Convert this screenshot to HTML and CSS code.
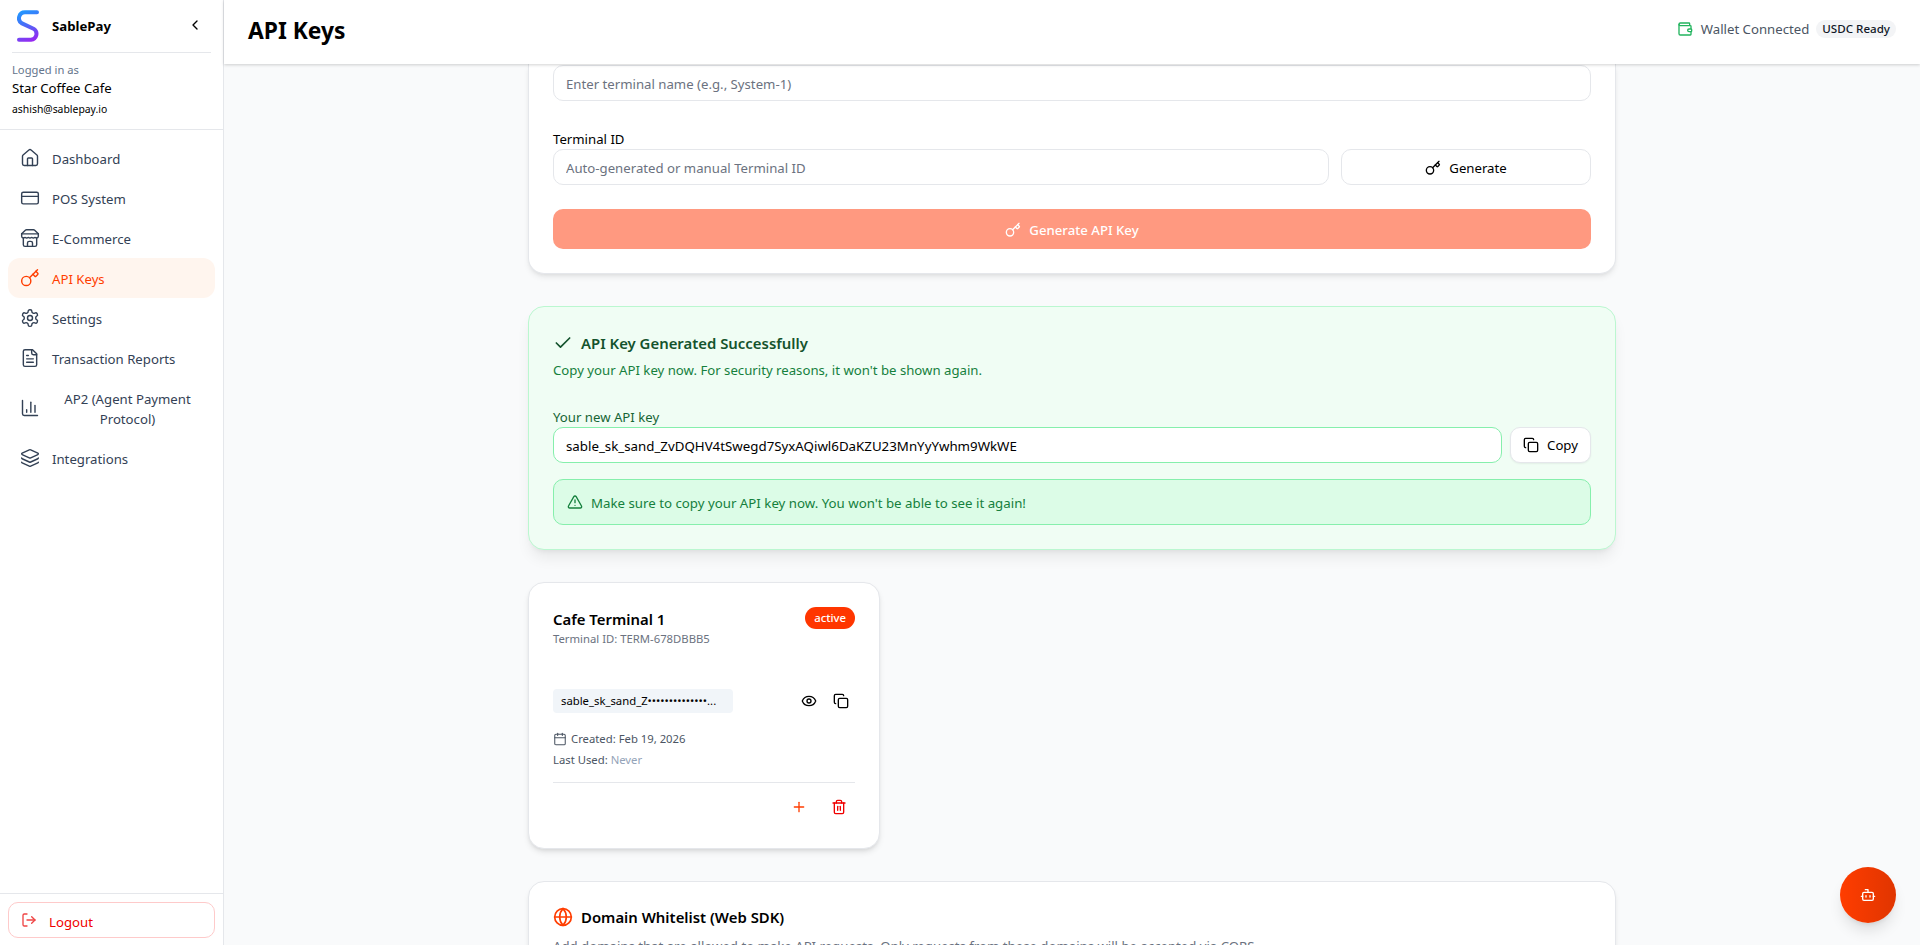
FILE: index.html
```html
<!DOCTYPE html>
<html lang="en">
<head>
<meta charset="utf-8">
<title>API Keys - SablePay</title>
<link rel="stylesheet" href="styles.css">
</head>
<body>
<svg class="defs" width="0" height="0" aria-hidden="true">
  <defs>
    <linearGradient id="logoGrad" gradientUnits="userSpaceOnUse" x1="4" y1="0" x2="18" y2="32">
      <stop offset="0" stop-color="#1e9bff"/>
      <stop offset="0.45" stop-color="#4a6cf7"/>
      <stop offset="1" stop-color="#a020f0"/>
    </linearGradient>
    <symbol id="i-key" viewBox="0 0 24 24"><path d="m15.5 7.5 2.3 2.3a1 1 0 0 0 1.4 0l2.1-2.1a1 1 0 0 0 0-1.4L19 4"/><path d="m21 2-9.6 9.6"/><circle cx="7.5" cy="15.5" r="5.5"/></symbol>
    <symbol id="i-copy" viewBox="0 0 24 24"><rect x="8" y="8" width="14" height="14" rx="2"/><path d="M4 16c-1.1 0-2-.9-2-2V4c0-1.1.9-2 2-2h10c1.1 0 2 .9 2 2"/></symbol>
  </defs>
</svg>
<div class="app">
  <aside class="sidebar">
    <div class="brand-block">
      <div class="brand">
        <svg class="logo" viewBox="0 0 22 32"><path d="M20 2.2H8A6 6 0 0 0 5 13.4l12 5.6A6 6 0 0 1 14 29.8H2"/></svg>
        <span class="brand-name">SablePay</span>
        <svg class="icon-chevron" viewBox="0 0 24 24"><path d="m15 18-6-6 6-6"/></svg>
      </div>
      <div class="account">
        <div class="account-label">Logged in as</div>
        <div class="account-name">Star Coffee Cafe</div>
        <div class="account-email">ashish@sablepay.io</div>
      </div>
    </div>
    <nav class="nav">
      <a class="nav-item"><svg class="icon" viewBox="0 0 24 24"><path d="M15 21v-8a1 1 0 0 0-1-1h-4a1 1 0 0 0-1 1v8"/><path d="M3 10a2 2 0 0 1 .709-1.528l7-5.999a2 2 0 0 1 2.582 0l7 5.999A2 2 0 0 1 21 10v9a2 2 0 0 1-2 2H5a2 2 0 0 1-2-2z"/></svg><span>Dashboard</span></a>
      <a class="nav-item"><svg class="icon" viewBox="0 0 24 24"><rect width="20" height="14" x="2" y="5" rx="2"/><path d="M2 10h20"/></svg><span>POS System</span></a>
      <a class="nav-item"><svg class="icon" viewBox="0 0 24 24"><path d="m2 7 4.41-4.41A2 2 0 0 1 7.83 2h8.34a2 2 0 0 1 1.42.59L22 7"/><path d="M4 12v8a2 2 0 0 0 2 2h12a2 2 0 0 0 2-2v-8"/><path d="M15 22v-4a2 2 0 0 0-2-2h-2a2 2 0 0 0-2 2v4"/><path d="M2 7h20"/><path d="M22 7v3a2 2 0 0 1-2 2a2.7 2.7 0 0 1-1.59-.63.7.7 0 0 0-.82 0A2.7 2.7 0 0 1 16 12a2.7 2.7 0 0 1-1.59-.63.7.7 0 0 0-.82 0A2.7 2.7 0 0 1 12 12a2.7 2.7 0 0 1-1.59-.63.7.7 0 0 0-.82 0A2.7 2.7 0 0 1 8 12a2.7 2.7 0 0 1-1.59-.63.7.7 0 0 0-.82 0A2.7 2.7 0 0 1 4 12a2 2 0 0 1-2-2V7"/></svg><span>E-Commerce</span></a>
      <a class="nav-item nav-active"><svg class="icon"><use href="#i-key"/></svg><span>API Keys</span></a>
      <a class="nav-item"><svg class="icon" viewBox="0 0 24 24"><path d="M12.22 2h-.44a2 2 0 0 0-2 2v.18a2 2 0 0 1-1 1.73l-.43.25a2 2 0 0 1-2 0l-.15-.08a2 2 0 0 0-2.73.73l-.22.38a2 2 0 0 0 .73 2.73l.15.1a2 2 0 0 1 1 1.72v.51a2 2 0 0 1-1 1.74l-.15.09a2 2 0 0 0-.73 2.73l.22.38a2 2 0 0 0 2.73.73l.15-.08a2 2 0 0 1 2 0l.43.25a2 2 0 0 1 1 1.73V20a2 2 0 0 0 2 2h.44a2 2 0 0 0 2-2v-.18a2 2 0 0 1 1-1.73l.43-.25a2 2 0 0 1 2 0l.15.08a2 2 0 0 0 2.73-.73l.22-.39a2 2 0 0 0-.73-2.73l-.15-.08a2 2 0 0 1-1-1.74v-.5a2 2 0 0 1 1-1.74l.15-.09a2 2 0 0 0 .73-2.73l-.22-.38a2 2 0 0 0-2.73-.73l-.15.08a2 2 0 0 1-2 0l-.43-.25a2 2 0 0 1-1-1.73V4a2 2 0 0 0-2-2z"/><circle cx="12" cy="12" r="3"/></svg><span>Settings</span></a>
      <a class="nav-item"><svg class="icon" viewBox="0 0 24 24"><path d="M15 2H6a2 2 0 0 0-2 2v16a2 2 0 0 0 2 2h12a2 2 0 0 0 2-2V7Z"/><path d="M14 2v4a2 2 0 0 0 2 2h4"/><path d="M10 9H8"/><path d="M16 13H8"/><path d="M16 17H8"/></svg><span>Transaction Reports</span></a>
      <a class="nav-item nav-tall"><svg class="icon" viewBox="0 0 24 24"><path d="M3 3v16a2 2 0 0 0 2 2h16"/><path d="M18 17V9"/><path d="M13 17V5"/><path d="M8 17v-3"/></svg><span class="nav-wrap">AP2 (Agent Payment Protocol)</span></a>
      <a class="nav-item"><svg class="icon" viewBox="0 0 24 24"><path d="M12.83 2.18a2 2 0 0 0-1.66 0L2.6 6.08a1 1 0 0 0 0 1.83l8.58 3.91a2 2 0 0 0 1.66 0l8.58-3.9a1 1 0 0 0 0-1.83z"/><path d="M2 12a1 1 0 0 0 .58.91l8.6 3.91a2 2 0 0 0 1.65 0l8.58-3.9A1 1 0 0 0 22 12"/><path d="M2 17a1 1 0 0 0 .58.91l8.6 3.91a2 2 0 0 0 1.65 0l8.58-3.9A1 1 0 0 0 22 17"/></svg><span>Integrations</span></a>
    </nav>
    <div class="sidebar-foot">
      <button class="logout"><svg class="icon-logout" viewBox="0 0 24 24"><path d="M9 21H5a2 2 0 0 1-2-2V5a2 2 0 0 1 2-2h4"/><path d="m16 17 5-5-5-5"/><path d="M21 12H9"/></svg><span>Logout</span></button>
    </div>
  </aside>

  <div class="page">
    <header class="topbar">
      <h1 class="page-title">API Keys</h1>
      <div class="status">
        <svg class="icon-wallet" viewBox="0 0 24 24"><path d="M19 7V4a1 1 0 0 0-1-1H5a2 2 0 0 0 0 4h15a1 1 0 0 1 1 1v4h-3a2 2 0 0 0 0 4h3a1 1 0 0 0 1-1v-2a1 1 0 0 0-1-1"/><path d="M3 5v14a2 2 0 0 0 2 2h15a1 1 0 0 0 1-1v-4"/></svg>
        <span class="status-text">Wallet Connected</span>
        <span class="status-badge">USDC Ready</span>
      </div>
    </header>
    <main class="content">
      <section class="card card-form">
        <input class="field" type="text" placeholder="Enter terminal name (e.g., System-1)">
        <label class="field-label">Terminal ID</label>
        <div class="id-row">
          <input class="field" type="text" placeholder="Auto-generated or manual Terminal ID">
          <button class="btn-outline"><svg class="icon-sm"><use href="#i-key"/></svg><span>Generate</span></button>
        </div>
        <button class="btn-primary"><svg class="icon-sm"><use href="#i-key"/></svg><span>Generate API Key</span></button>
      </section>

      <section class="card card-success">
        <div class="success-title"><svg class="icon-check" viewBox="0 0 24 24"><path d="M20 6 9 17l-5-5"/></svg><h2>API Key Generated Successfully</h2></div>
        <p class="success-desc">Copy your API key now. For security reasons, it won't be shown again.</p>
        <label class="success-label">Your new API key</label>
        <div class="key-row">
          <input class="field field-key" type="text" readonly value="sable_sk_sand_ZvDQHV4tSwegd7SyxAQiwl6DaKZU23MnYyYwhm9WkWE">
          <button class="btn-copy"><svg class="icon-sm"><use href="#i-copy"/></svg><span>Copy</span></button>
        </div>
        <div class="warning"><svg class="icon-sm" viewBox="0 0 24 24"><path d="m21.73 18-8-14a2 2 0 0 0-3.48 0l-8 14A2 2 0 0 0 4 21h16a2 2 0 0 0 1.73-3"/><path d="M12 9v4"/><path d="M12 17h.01"/></svg><span class="warning-text">Make sure to copy your API key now. You won't be able to see it again!</span></div>
      </section>

      <div class="terminal-grid">
        <article class="card terminal">
          <div class="terminal-head">
            <div>
              <h3 class="terminal-name">Cafe Terminal 1</h3>
              <div class="terminal-id">Terminal ID: TERM-678DBBB5</div>
            </div>
            <span class="badge-active">active</span>
          </div>
          <div class="terminal-key">
            <code class="key-pill">sable_sk_sand_Z••••••••••••••...</code>
            <svg class="icon-sm icon-eye" viewBox="0 0 24 24"><path d="M2.062 12.348a1 1 0 0 1 0-.696 10.75 10.75 0 0 1 19.876 0 1 1 0 0 1 0 .696 10.75 10.75 0 0 1-19.876 0"/><circle cx="12" cy="12" r="3"/></svg>
            <svg class="icon-sm"><use href="#i-copy"/></svg>
          </div>
          <div class="meta-created"><svg class="icon-cal" viewBox="0 0 24 24"><path d="M8 2v4"/><path d="M16 2v4"/><rect width="18" height="18" x="3" y="4" rx="2"/><path d="M3 10h18"/></svg><span>Created: Feb 19, 2026</span></div>
          <div class="meta-used">Last Used: <span class="meta-never">Never</span></div>
          <div class="terminal-actions">
            <svg class="icon-sm icon-plus" viewBox="0 0 24 24"><path d="M5 12h14"/><path d="M12 5v14"/></svg>
            <svg class="icon-sm icon-trash" viewBox="0 0 24 24"><path d="M3 6h18"/><path d="M19 6v14c0 1-1 2-2 2H7c-1 0-2-1-2-2V6"/><path d="M8 6V4c0-1 1-2 2-2h4c1 0 2 1 2 2v2"/><path d="M10 11v6"/><path d="M14 11v6"/></svg>
          </div>
        </article>
      </div>

      <section class="card card-domain">
        <div class="domain-title"><svg class="icon-globe" viewBox="0 0 24 24"><circle cx="12" cy="12" r="10"/><path d="M12 2a14.5 14.5 0 0 0 0 20 14.5 14.5 0 0 0 0-20"/><path d="M2 12h20"/></svg><h2>Domain Whitelist (Web SDK)</h2></div>
        <p class="domain-desc">Add domains that are allowed to make API requests. Only requests from these domains will be accepted via CORS.</p>
      </section>
    </main>
  </div>
</div>
<button class="fab" aria-label="Assistant"><svg class="icon-sm" viewBox="0 0 24 24"><path d="M12 8V4H8"/><rect width="16" height="12" x="4" y="8" rx="2"/><path d="M2 14h2"/><path d="M20 14h2"/><path d="M15 13v2"/><path d="M9 13v2"/></svg></button>
</body>
</html>
```
FILE: styles.css
```css
* { box-sizing: border-box; }
html, body { margin: 0; height: 100%; overflow: hidden; }
body { font-family: "Noto Sans", "Open Sans", sans-serif; font-size: 13.2px; line-height: 20px; background: #f9fafb; color: #000; }
svg { fill: none; stroke: currentColor; stroke-width: 2; stroke-linecap: round; stroke-linejoin: round; flex: none; }
h1, h2, h3, p { margin: 0; }
.defs { position: absolute; }
button, input { font: inherit; }

.app { display: flex; height: 945px; }

.sidebar { width: 224px; flex: none; display: flex; flex-direction: column; background: #fff; border-right: 1px solid #e5e7eb; }
.brand-block { padding: 0 12px; height: 130px; border-bottom: 1px solid #e5e7eb; margin: 0; }
.brand { display: flex; align-items: center; height: 53px; padding: 0 0 1px 5px; border-bottom: 1px solid #e5e7eb; }
.logo { width: 22px; height: 32px; stroke: url(#logoGrad); stroke-width: 4; }
.brand-name { font-size: 13.2px; font-weight: 700; margin-left: 13px; flex: 1; }
.icon-chevron { width: 16px; height: 16px; margin-right: 8px; margin-top: -2px; }
.account { padding-top: 7px; }
.account-label { font-size: 11.2px; line-height: 20px; color: #64748b; }
.account-name { font-size: 13.2px; line-height: 20px; margin-top: -2px; }
.account-email { font-size: 10.4px; line-height: 16px; margin-top: 3px; }

.nav { flex: 1; padding: 8px 0 0; }
.nav-item { display: flex; align-items: center; gap: 12px; height: 40px; margin: 0 8px; padding: 0 12px; border-radius: 12px; color: #334155; font-size: 13.2px; }
.nav-item span { padding-top: 1px; }
.nav-tall { height: 60px; }
.nav-wrap { flex: 1; text-align: center; }
.nav-active { background: #fff5ee; color: #ff3d00; }
.icon { width: 20px; height: 20px; stroke-width: 1.7; }

.sidebar-foot { border-top: 1px solid #e5e7eb; padding: 8px 8px 7px; }
.logout { display: flex; align-items: center; width: 100%; height: 36px; padding: 0 12px; gap: 12px; background: #fff; border: 1px solid #fecaca; border-radius: 10px; color: #f00000; font-size: 13.2px; }
.logout span { padding-top: 3px; }
.icon-logout { width: 16px; height: 16px; color: #ef4444; }

.page { flex: 1; min-width: 0; display: flex; flex-direction: column; }
.topbar { position: relative; z-index: 2; height: 64px; flex: none; display: flex; align-items: center; justify-content: space-between; padding: 0 24px; background: #fff; box-shadow: 0 1px 3px rgba(0,0,0,.18); }
.page-title { font-size: 22.8px; line-height: 32px; font-weight: 700; margin-top: -2px; }
.status { display: flex; align-items: center; margin-bottom: 7px; }
.icon-wallet { width: 16px; height: 16px; color: #22b45e; }
.status-text { margin-left: 8px; font-size: 13.2px; color: #4b5563; }
.status-badge { margin-left: 7px; height: 18px; line-height: 18px; padding: 0 6px; border-radius: 9px; background: #f3f4f6; font-size: 11.6px; font-weight: 500; color: #111827; }

.content { flex: 1; overflow: hidden; display: flex; flex-direction: column; align-items: center; }
.card { width: 1088px; flex: none; background: #fff; border: 1px solid #e5e7eb; border-radius: 16px; box-shadow: 0 4px 6px -1px rgba(0,0,0,.08), 0 2px 4px -2px rgba(0,0,0,.08); }

.card-form { display: flex; flex-direction: column; padding: 1px 24px 24px; height: 210px; margin-bottom: 32px; border-top: 0; border-top-left-radius: 0; border-top-right-radius: 0; }
.field { height: 36px; width: 100%; padding: 2px 12px 0; background: #fff; border: 1px solid #e5e7eb; border-radius: 10px; font-size: 13.2px; color: #000; outline: none; }
.field::placeholder { color: #6b7280; opacity: 1; }
.field-label { margin-top: 28px; line-height: 20px; }
.id-row { display: grid; grid-template-columns: 1fr 250px; gap: 12px; }
.btn-outline { display: flex; align-items: center; justify-content: center; gap: 8px; height: 36px; background: #fff; border: 1px solid #e5e7eb; border-radius: 10px; color: #000; padding: 1px 0 0; font-size: 13.2px; }
.btn-primary { display: flex; align-items: center; justify-content: center; gap: 8px; height: 40px; margin-top: 24px; background: #ff9980; color: #fff; border: 0; border-radius: 10px; font-size: 13.2px; font-weight: 500; padding: 1px 0 0; }
.icon-sm { width: 16px; height: 16px; }

.card-success { height: 244px; padding: 24px; background: #f0fdf4; border-color: #bbf7d0; margin-bottom: 32px; box-shadow: 0 10px 15px -3px rgba(0,0,0,.08), 0 4px 6px -4px rgba(0,0,0,.08); }
.success-title { display: flex; align-items: center; gap: 8px; height: 24px; color: #14532d; }
.icon-check { width: 20px; height: 20px; }
.success-title h2 { font-size: 14.9px; line-height: 24px; font-weight: 600; }
.success-desc { margin-top: 5px; color: #15803d; font-size: 13.2px; }
.success-label { display: block; margin-top: 27px; color: #166534; font-size: 13.2px; line-height: 20px; }
.key-row { display: flex; gap: 8px; }
.field-key { flex: 1; width: auto; border-color: #86efac; font-size: 13.3px; padding-top: 1px; }
.btn-copy { display: flex; align-items: center; justify-content: center; gap: 8px; width: 81px; height: 36px; padding: 0; background: #fff; border: 1px solid #e5e7eb; border-radius: 10px; color: #000; font-size: 13.2px; box-shadow: 0 1px 2px rgba(0,0,0,.06); }
.warning { display: flex; align-items: center; gap: 8px; height: 46px; margin-top: 16px; padding: 0 13px; background: #dcfce7; border: 1px solid #86efac; border-radius: 10px; color: #15803d; font-size: 13.27px; }
.warning-text { padding-top: 1px; }

.terminal-grid { width: 1088px; display: grid; grid-template-columns: 352px; margin-bottom: 32px; }
.terminal { width: auto; height: 267px; padding: 24px; box-shadow: 0 4px 6px -1px rgba(0,0,0,.1), 0 2px 4px -2px rgba(0,0,0,.1); }
.terminal-head { display: flex; justify-content: space-between; align-items: flex-start; }
.terminal-name { font-size: 14.9px; line-height: 23px; padding-top: 1px; font-weight: 600; }
.terminal-id { font-size: 11.3px; line-height: 16px; color: #6b7280; }
.badge-active { height: 22px; line-height: 21px; padding: 0 9px; border-radius: 11px; background: #ff3600; color: #fff; font-size: 11.3px; font-weight: 500; }
.terminal-key { display: flex; align-items: center; margin-top: 42px; }
.key-pill { width: 180px; height: 24px; line-height: 24px; padding: 0 8px; background: #f1f5f9; border-radius: 4px; font-family: "Noto Sans", sans-serif; font-size: 11.3px; white-space: nowrap; overflow: hidden; }
.icon-eye { margin-left: auto; margin-right: 16px; }
.terminal-key .icon-sm:last-child { margin-right: 6px; }
.meta-created { display: flex; align-items: center; gap: 4px; margin-top: 16px; font-size: 11.3px; line-height: 20px; color: #4b5563; }
.icon-cal { width: 14px; height: 14px; stroke-width: 1.8; }
.meta-used { margin-top: 1px; font-size: 11.3px; line-height: 20px; color: #4b5563; }
.meta-never { color: #94a3b8; }
.terminal-actions { display: flex; justify-content: flex-end; gap: 24px; margin-top: 12px; padding: 16px 8px 0 0; border-top: 1px solid #e5e7eb; }
.icon-plus { color: #ff3d00; }
.icon-trash { color: #f00000; }

.card-domain { padding: 24px; }
.domain-title { display: flex; align-items: center; gap: 8px; height: 24px; margin-top: -1px; }
.icon-globe { width: 20px; height: 20px; color: #ff3d00; }
.domain-title h2 { font-size: 14.9px; line-height: 24px; font-weight: 600; }
.domain-desc { margin-top: 8px; color: #6b7280; font-size: 13.2px; line-height: 18px; }

.fab { position: fixed; right: 24px; bottom: 22px; width: 56px; height: 56px; display: flex; align-items: center; justify-content: center; padding: 0; border: 0; border-radius: 50%; background: linear-gradient(90deg, #ff3d00, #e03500); color: #fff; box-shadow: 0 10px 15px -3px rgba(0,0,0,.12), 0 4px 6px -4px rgba(0,0,0,.12); }
```
